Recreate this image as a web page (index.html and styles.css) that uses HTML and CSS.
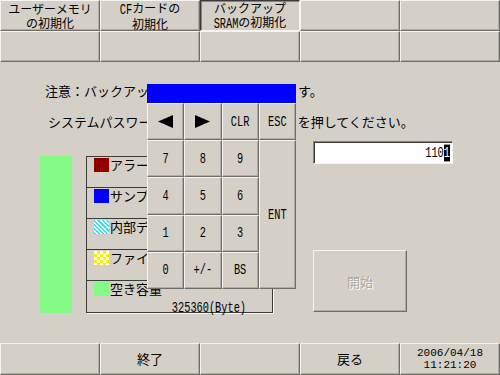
FILE: index.html
```html
<!DOCTYPE html>
<html>
<head>
    <meta charset="utf-8">
    <title>バックアップSRAMの初期化</title>
    <link rel="stylesheet" href="styles.css">
</head>
<body>
<div class="screen">
    <div class="menu">
        <div class="btn">ユーザーメモリ<br>の初期化</div>
        <div class="btn"><span><span class="mono">CF</span>カードの<br>初期化</span></div>
        <div class="btn selected"><span>バックアップ<br><span class="mono">SRAM</span>の初期化</span></div>
        <div class="btn"></div>
        <div class="btn"></div>
        <div class="btn"></div>
        <div class="btn"></div>
        <div class="btn"></div>
        <div class="btn"></div>
        <div class="btn"></div>
    </div>

    <div class="main">
        <div class="notice">
            <div class="line line-warn">注意：バックアッ<span class="cut cut-warn"></span>す。</div>
            <div class="line line-pass">システムパスワー<span class="cut cut-pass"></span>を押してください。</div>
        </div>

        <div class="panel">
            <div class="usage">
                <div class="bar"></div>
                <div class="legend">
                    <div class="legend-row">
                        <div class="legend-label"><span class="swatch sw-alarm"></span>アラー</div>
                    </div>
                    <div class="legend-row">
                        <div class="legend-label"><span class="swatch sw-sample"></span>サンプ</div>
                    </div>
                    <div class="legend-row">
                        <div class="legend-label"><span class="swatch sw-device"></span>内部デ</div>
                    </div>
                    <div class="legend-row">
                        <div class="legend-label"><span class="swatch sw-file"></span>ファイ</div>
                    </div>
                    <div class="legend-row">
                        <div class="legend-label"><span class="swatch sw-free"></span>空き容量</div>
                        <div class="legend-value"><span class="mono">325360(Byte)</span></div>
                    </div>
                </div>
            </div>

            <div class="side">
                <div class="input"><span class="mono">110<span class="caret">1</span></span></div>
                <div class="start">開始</div>
            </div>
        </div>

        <div class="keypad">
            <div class="keypad-title"></div>
            <div class="keys">
                <div class="key">
                    <svg width="15" height="13" viewBox="0 0 15 13"><polygon points="0,6.5 15,0 15,13" fill="#000"/></svg>
                </div>
                <div class="key">
                    <svg width="15" height="13" viewBox="0 0 15 13"><polygon points="15,6.5 0,0 0,13" fill="#000"/></svg>
                </div>
                <div class="key"><span class="mono">CLR</span></div>
                <div class="key"><span class="mono">ESC</span></div>
                <div class="key"><span class="mono">7</span></div>
                <div class="key"><span class="mono">8</span></div>
                <div class="key"><span class="mono">9</span></div>
                <div class="key key-ent"><span class="mono">ENT</span></div>
                <div class="key"><span class="mono">4</span></div>
                <div class="key"><span class="mono">5</span></div>
                <div class="key"><span class="mono">6</span></div>
                <div class="key"><span class="mono">1</span></div>
                <div class="key"><span class="mono">2</span></div>
                <div class="key"><span class="mono">3</span></div>
                <div class="key"><span class="mono">0</span></div>
                <div class="key"><span class="mono">+/-</span></div>
                <div class="key"><span class="mono">BS</span></div>
            </div>
        </div>
    </div>

    <div class="footer">
        <div class="btn"></div>
        <div class="btn">終了</div>
        <div class="btn"></div>
        <div class="btn">戻る</div>
        <div class="btn clock">
            <span class="clock-line">2006/04/18</span>
            <span class="clock-line">11:21:20</span>
        </div>
    </div>
</div>
</body>
</html>
```

FILE: styles.css
```css
body {
    margin: 0;
    background-color: #d4d0c8;
    font-family: "Noto Sans CJK JP", sans-serif;
    font-size: 13px;
    color: #000;
}
.screen {
    width: 500px;
    height: 375px;
    display: flex;
    flex-direction: column;
    overflow: hidden;
}
.mono {
    font-family: "Liberation Mono", monospace;
    font-size: 10.3px;
    display: inline-block;
    transform: scaleY(1.4);
}

/* bevelled buttons */
.btn {
    display: flex;
    align-items: center;
    justify-content: center;
    text-align: center;
    line-height: 14px;
    font-size: 12px;
    border: 1px solid;
    border-color: #f6f5f1 #6f6d68 #6f6d68 #f6f5f1;
    box-shadow: inset -1px -1px 0 #aeaca6;
}
.btn.selected {
    border-color: #3c3b38 #f6f5f1 #f6f5f1 #3c3b38;
    box-shadow: inset 1px 1px 0 #85837e;
}
.menu {
    display: grid;
    grid-template-columns: repeat(5, 1fr);
    grid-template-rows: 31px 31px;
}
.footer {
    display: grid;
    grid-template-columns: repeat(5, 1fr);
    height: 32px;
}
.footer .btn {
    font-size: 13px;
}
.clock {
    flex-direction: column;
}
.clock-line {
    font-family: "Liberation Mono", monospace;
    font-size: 11px;
    line-height: 12px;
}

/* main area */
.main {
    flex: 1;
    position: relative;
}
.notice {
    padding-top: 13px;
}
.line {
    display: flex;
    align-items: center;
    height: 31px;
    white-space: nowrap;
}
.line-warn {
    padding-left: 45px;
}
.line-pass {
    padding-left: 48px;
}
.cut-warn {
    width: 149px;
}
.cut-pass {
    width: 146px;
}
.panel {
    display: flex;
    align-items: flex-start;
    margin-top: 4px;
}
.usage {
    display: flex;
    gap: 14px;
    margin-top: 15px;
    margin-left: 40px;
}
.bar {
    width: 32px;
    height: 157px;
    background-color: #84fb84;
}
.legend {
    width: 185px;
    border: 1px solid #3c3b38;
    box-shadow: 1px 1px 0 #f6f5f1;
}
.legend-row {
    height: 30px;
    border-bottom: 1px solid #3c3b38;
    padding-left: 7px;
}
.legend-row:last-child {
    border-bottom: none;
}
.legend-label {
    display: flex;
    align-items: center;
    height: 15px;
    white-space: nowrap;
}
.legend-value {
    height: 15px;
    text-align: right;
    padding-right: 26px;
}
.swatch {
    width: 15px;
    height: 14px;
    margin-right: 1px;
}
.sw-alarm {
    background: repeating-linear-gradient(90deg, #9a0000 0 1px, #6a0000 1px 2px);
}
.sw-sample {
    background-color: #0000ff;
}
.sw-device {
    background: repeating-linear-gradient(45deg, #2ee6f0 0 1.5px, #ffffff 1.5px 3px);
}
.sw-file {
    background-color: #ffffff;
    background-image: conic-gradient(#f8f000 25%, #ffffff 0 50%, #f8f000 0 75%, #ffffff 0);
    background-size: 6px 6px;
}
.sw-free {
    background-color: #84fb84;
}

.side {
    margin-left: 40px;
    display: flex;
    flex-direction: column;
}
.input {
    width: 140px;
    height: 23px;
    box-sizing: border-box;
    background-color: #fff;
    border: 1px solid;
    border-color: #85837e #f6f5f1 #f6f5f1 #85837e;
    box-shadow: inset 1px 1px 0 #3c3b38;
    display: flex;
    align-items: center;
    justify-content: flex-end;
    padding-right: 2px;
}
.caret {
    background-color: #000;
    color: #fff;
}
.start {
    width: 94px;
    height: 62px;
    box-sizing: border-box;
    margin-top: 86px;
    display: flex;
    align-items: center;
    justify-content: center;
    color: #a9a7a2;
    text-shadow: 1px 1px 0 #fff;
    border: 1px solid;
    border-color: #f6f5f1 #6f6d68 #6f6d68 #f6f5f1;
    box-shadow: inset -1px -1px 0 #aeaca6;
}

/* numeric keypad popup */
.keypad {
    position: absolute;
    left: 147px;
    top: 22px;
    width: 149px;
    display: flex;
    flex-direction: column;
    background-color: #d4d0c8;
}
.keypad-title {
    height: 19px;
    background-color: #0000ff;
}
.keys {
    display: grid;
    grid-template-columns: repeat(4, 1fr);
    grid-template-rows: repeat(5, 37.2px);
}
.key {
    display: flex;
    align-items: center;
    justify-content: center;
    border: 1px solid;
    border-color: #f6f5f1 #6f6d68 #6f6d68 #f6f5f1;
    box-shadow: inset -1px -1px 0 #aeaca6;
}
.key-ent {
    grid-column: 4;
    grid-row: 2 / span 4;
}
```
